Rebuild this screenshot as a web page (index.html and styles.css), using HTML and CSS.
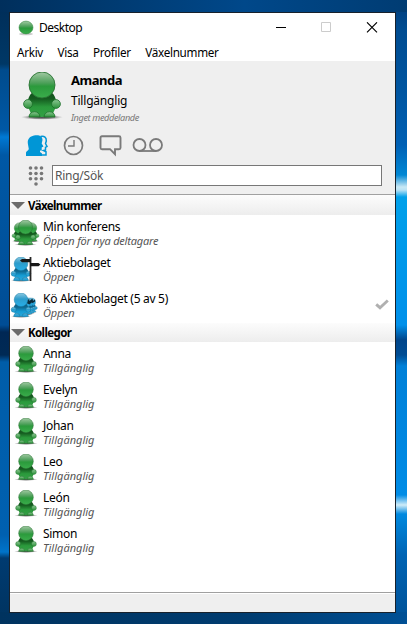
FILE: index.html
```
<!DOCTYPE html>
<html lang="sv">
<head>
<meta charset="utf-8">
<title>Desktop</title>
<link rel="stylesheet" href="styles.css">
</head>
<body>
<svg class="defs" aria-hidden="true">
  <defs>
    <linearGradient id="gHead" x1="0" y1="0" x2="0" y2="1"><stop offset="0" stop-color="#a2c9a3"/><stop offset=".42" stop-color="#4da05a"/><stop offset=".55" stop-color="#2b9a3c"/><stop offset="1" stop-color="#3aad4b"/></linearGradient>
    <linearGradient id="gBody" x1="0" y1="0" x2="0" y2="1"><stop offset="0" stop-color="#124f1b"/><stop offset=".28" stop-color="#155d20"/><stop offset=".6" stop-color="#2b9a3c"/><stop offset="1" stop-color="#34a046"/></linearGradient>
    <linearGradient id="gHand" x1="0" y1="0" x2="0" y2="1"><stop offset="0" stop-color="#8cc793"/><stop offset="1" stop-color="#2b9139"/></linearGradient>
    <linearGradient id="bHead" x1="0" y1="0" x2="0" y2="1"><stop offset="0" stop-color="#8cc8e0"/><stop offset=".45" stop-color="#2d9ccb"/><stop offset="1" stop-color="#27aee8"/></linearGradient>
    <linearGradient id="bBody" x1="0" y1="0" x2="0" y2="1"><stop offset="0" stop-color="#0e5a7c"/><stop offset=".3" stop-color="#0e6a92"/><stop offset=".6" stop-color="#159bd2"/><stop offset="1" stop-color="#2ba9dc"/></linearGradient>
    <radialGradient id="shade"><stop offset="0" stop-color="#222" stop-opacity=".85"/><stop offset=".6" stop-color="#444" stop-opacity=".55"/><stop offset="1" stop-color="#888" stop-opacity="0"/></radialGradient>
    <symbol id="person" viewBox="0 0 42 48">
      <ellipse cx="21" cy="45.2" rx="21" ry="2.6" fill="url(#shade)"/>
      <path d="M12 20h18c4 3 6 8 5 14-1 4-3 6-4 11H11C10 40 8 38 7 34c-1-6 1-11 5-14z" fill="url(#gBody)"/>
      <g fill="url(#gHand)" stroke="#1c7029" stroke-width=".8"><circle cx="7" cy="32" r="4.4"/><circle cx="35" cy="32" r="4.4"/><path d="M8 45c0-7 11-7 11 0z"/><path d="M23 45c0-7 11-7 11 0z"/></g>
      <circle cx="21" cy="13" r="13" fill="url(#gHead)" stroke="#2a7434" stroke-width=".9"/>
    </symbol>
    <symbol id="blue" viewBox="0 0 42 48">
      <ellipse cx="21" cy="45.5" rx="20" ry="2.2" fill="url(#shade)"/>
      <path d="M12 20h18c4 3 6 8 5 14-1 4-3 6-4 11H11C10 40 8 38 7 34c-1-6 1-11 5-14z" fill="url(#bBody)"/>
      <g fill="url(#bHead)" stroke="#11769f"><circle cx="7" cy="32" r="4.8"/><circle cx="35" cy="32" r="4.8"/><path d="M7 45c0-8 12-8 12 0z"/><path d="M23 45c0-8 12-8 12 0z"/></g>
      <circle cx="21" cy="13" r="13" fill="url(#bHead)" stroke="#1980aa"/>
    </symbol>
  </defs>
</svg>
<main class="window">
  <header class="titlebar">
    <svg class="ball" viewBox="0 0 16 16"><ellipse cx="8" cy="14" rx="7" ry="1.3" fill="#ccc"/><ellipse cx="8" cy="7.500" rx="7" ry="6.400" fill="url(#gHead)" stroke="#2d8339" stroke-width=".5"/></svg>
    <h1 class="title">Desktop</h1>
    <svg class="controls" viewBox="0 0 108 12" fill="none"><path d="M0 5.500h10" stroke="#000"/><path d="M45.500 .5h9v9h-9z" stroke="#ccc"/><path d="M91 .3l10 10M101 .3L91 10.300" stroke="#000" stroke-width="1.100"/></svg>
  </header>
  <nav class="menu"><span>Arkiv</span><span>Visa</span><span>Profiler</span><span>Växelnummer</span></nav>
  <section class="panel">
    <div class="profile">
      <svg class="avatar"><use href="#person"/></svg>
      <div class="who"><strong class="me">Amanda</strong><span class="state">Tillgänglig</span><em class="message">Inget meddelande</em></div>
    </div>
    <svg class="tools" viewBox="0 0 140 22" fill="none">
      <path d="M14.500 1.500c4-.8 6 1 5.800 4.500l-.8 2.500 1.500 3-1.500.8v2.700l-2 .5 2.500 1.200v3.300h-5" stroke="#0096d6" stroke-width="1.500"/>
      <path d="M8 .5c5-1 8.500.5 8.500 4.500l-.8 3.500 1.800 3-1.800 1v3h-1.700v1.500l2 1.500V21H0v-3.500c.5-1.500 2.500-2 2.800-3.500L2 9.500C1 5 3 1.500 8 .5z" fill="#0096d6"/>
      <circle cx="47.500" cy="10.500" r="9" stroke="#7a7a7a" stroke-width="1.700"/><path d="M48 5v6h-6" stroke="#7a7a7a" stroke-width="1.400"/>
      <path d="M76 1.200h17q1.500 0 1.500 1.500v10q0 1.500-1.500 1.500h-4v5l-5-5h-8q-1.500 0-1.500-1.500v-10q0-1.500 1.500-1.500z" stroke="#7a7a7a" stroke-width="1.900"/>
      <circle cx="113.500" cy="10" r="6" stroke="#7a7a7a" stroke-width="1.800"/><circle cx="130" cy="10" r="6" stroke="#7a7a7a" stroke-width="1.800"/><path d="M113 16h17" stroke="#7a7a7a" stroke-width="1.800"/>
    </svg>
    <div class="dial">
      <svg class="keypad" viewBox="0 0 16 20" fill="#777"><circle cx="2.500" cy="2" r="1.800"/><circle cx="8" cy="2" r="1.800"/><circle cx="13.500" cy="2" r="1.800"/><circle cx="2.500" cy="7.500" r="1.800"/><circle cx="8" cy="7.500" r="1.800"/><circle cx="13.500" cy="7.500" r="1.800"/><circle cx="2.500" cy="12.800" r="1.800"/><circle cx="8" cy="12.800" r="1.800"/><circle cx="13.500" cy="12.800" r="1.800"/><circle cx="8" cy="18" r="1.800"/></svg>
      <div class="search">Ring/Sök</div>
    </div>
  </section>
  <section class="lists">
    <h2 class="group"><svg class="arrow" viewBox="0 0 14 7"><path d="M0 0h14L7 7z" fill="#6b6b6b"/></svg><span>Växelnummer</span></h2>
    <div class="row"><svg class="pic" viewBox="0 0 32 32"><use href="#person" x="1" y="6" width="17" height="21"/><use href="#person" x="13" y="6" width="17" height="21"/><use href="#person" x="4" y="4" width="23" height="26"/></svg><div class="text"><span class="name">Min konferens</span><em class="sub tight">Öppen för nya deltagare</em></div></div>
    <div class="row"><svg class="pic" viewBox="0 0 32 32"><use href="#blue" x="0" y="5" width="22" height="25"/><path d="M20.500 29V5" stroke="#252525" stroke-width="1.800"/><path d="M12 7h8v3.200h-8l-2-1.600zM20 11h8.500l2 1.600-2 1.600H20z" fill="#181818"/></svg><div class="text"><span class="name">Aktiebolaget</span><em class="sub tight">Öppen</em></div></div>
    <div class="row"><svg class="pic" viewBox="0 0 32 32"><use href="#blue" x="15" y="9" width="13" height="17"/><use href="#blue" x="12" y="9" width="14" height="18"/><use href="#blue" x="9" y="9" width="15" height="19"/><path d="M15 14l4-3 .5 2 3-2.500.5 2.500 2-1.500v2l-2.500 1.500-1-.5-2 2-2-1z" fill="#0b2a38"/><use href="#blue" x="0" y="5" width="22" height="25"/></svg><div class="text"><span class="name">Kö Aktiebolaget (5 av 5)</span><em class="sub tight">Öppen</em></div><svg class="check" viewBox="0 0 14 11"><path d="M1.200 5.300L5 8.700 12.800 1.500" fill="none" stroke="#b0b0b0" stroke-width="2.900"/></svg></div>
    <h2 class="group second"><svg class="arrow" viewBox="0 0 14 7"><path d="M0 0h14L7 7z" fill="#6b6b6b"/></svg><span>Kollegor</span></h2>
    <div class="row"><svg class="pic" viewBox="0 0 32 32"><use href="#person" x="4" y="3" width="24" height="27"/></svg><div class="text"><span class="name">Anna</span><em class="sub">Tillgänglig</em></div></div>
    <div class="row"><svg class="pic" viewBox="0 0 32 32"><use href="#person" x="4" y="3" width="24" height="27"/></svg><div class="text"><span class="name">Evelyn</span><em class="sub">Tillgänglig</em></div></div>
    <div class="row"><svg class="pic" viewBox="0 0 32 32"><use href="#person" x="4" y="3" width="24" height="27"/></svg><div class="text"><span class="name">Johan</span><em class="sub">Tillgänglig</em></div></div>
    <div class="row"><svg class="pic" viewBox="0 0 32 32"><use href="#person" x="4" y="3" width="24" height="27"/></svg><div class="text"><span class="name">Leo</span><em class="sub">Tillgänglig</em></div></div>
    <div class="row"><svg class="pic" viewBox="0 0 32 32"><use href="#person" x="4" y="3" width="24" height="27"/></svg><div class="text"><span class="name">León</span><em class="sub">Tillgänglig</em></div></div>
    <div class="row"><svg class="pic" viewBox="0 0 32 32"><use href="#person" x="4" y="3" width="24" height="27"/></svg><div class="text"><span class="name">Simon</span><em class="sub">Tillgänglig</em></div></div>
  </section>
  <footer class="status"></footer>
</main>
</body>
</html>
```
FILE: styles.css
```
* { box-sizing: border-box; }
body {
  margin: 0;
  width: 407px;
  height: 624px;
  padding: 12px 11px 11px 9px;
  overflow: hidden;
  font: 12px/16px "Noto Sans", "Open Sans", sans-serif;
  color: #000;
  background:
    linear-gradient(90deg, #002f5c, #00488a 60%, #003c73) top / 100% 12px no-repeat,
    linear-gradient(90deg, #00335f, #003c70 60%, #005095) bottom / 100% 12px no-repeat,
    linear-gradient(#003c7a, #004c91 30px, #0055a0 90px, #0060b4 145px, #0087d4 175px, #c8e8f5 187px, #b8e2f5 190px, #00a0ea 197px, #0090ea 325px, #00458a 340px, #004d94 355px, #0080d8 366px, #008ce6 495px, #d0ecf8 505px, #0089df 514px, #0064b4 555px, #005095 624px) right / 12px 100% no-repeat,
    linear-gradient(#002d58, #003866 64px, #004b8c 70px, #0058a5 130px, #0079d4 137px, #0058a5 155px, #004d95 325px, #002754 332px, #002a55 355px, #005da9 362px, #0060b0 535px, #0074ca 552px, #003b71 558px, #00335f 624px) left / 10px 100% no-repeat,
    #004080;
}
.defs { position: absolute; width: 0; height: 0; }
.window { display: flex; flex-direction: column; height: 601px; background: #fff; border: 1px solid #18212b; }
.titlebar { display: flex; align-items: center; height: 30px; padding: 0 11px 0 8px; }
.ball { width: 16px; height: 16px; }
.title { flex: 1; margin: 0 0 0 5px; font-size: 12px; font-weight: 400; letter-spacing: -.5px; }
.controls { width: 108px; height: 12px; }
.menu { display: flex; gap: 14.500px; height: 18px; padding: 1px 7px 0; font-size: 11.700px; letter-spacing: -.3px; }
.panel { height: 134px; background: #efefef; border-bottom: 1px solid #a0a0a0; }
.profile { display: flex; height: 70px; padding: 11px 0 0 11px; }
.avatar { width: 42px; height: 48px; }
.who { display: flex; flex-direction: column; margin: -1px 0 0 8px; }
.me { height: 21px; line-height: 18px; font-size: 13px; letter-spacing: -.45px; }
.state { height: 17px; line-height: 18px; letter-spacing: -.2px; }
.message { font-size: 9.200px; line-height: 17px; letter-spacing: -.4px; color: #787878; white-space: nowrap; }
.tools { display: block; width: 140px; height: 22px; margin: 4px 0 0 16px; }
.dial { display: flex; margin-top: 8px; padding: 0 13px 0 18px; }
.keypad { width: 16px; height: 20px; margin-top: 1px; }
.search { flex: 1; height: 21px; margin-left: 8px; padding: 1px 2px; line-height: 18px; background: #fff; border: 1px solid #777; color: #555; letter-spacing: -.25px; }
.lists { flex: 1; }
.group { display: flex; align-items: center; height: 20px; margin: 0; padding: 0 1px; font-size: 11.500px; line-height: 20px; background: linear-gradient(#fcfcfc, #ededed); letter-spacing: -.6px; }
.second { height: 19px; }
.group span { padding-top: 1px; }
.arrow { width: 14px; height: 7px; margin-right: 3px; }
.row { display: flex; align-items: flex-start; height: 36px; }
.pic { width: 32px; height: 32px; margin-top: 1px; }
.text { flex: 1; display: flex; flex-direction: column; padding: 4px 0 0 1px; }
.name { line-height: 15px; letter-spacing: -.3px; white-space: nowrap; }
.sub { font-size: 11px; line-height: 13px; color: #555; white-space: nowrap; }
.tight { letter-spacing: -.2px; }
.check { width: 14px; height: 11px; margin: 12px 6px 0 0; }
.status { height: 20px; background: #efefef; border-top: 1px solid #a0a0a0; box-shadow: inset 0 1px #fff; }
```
